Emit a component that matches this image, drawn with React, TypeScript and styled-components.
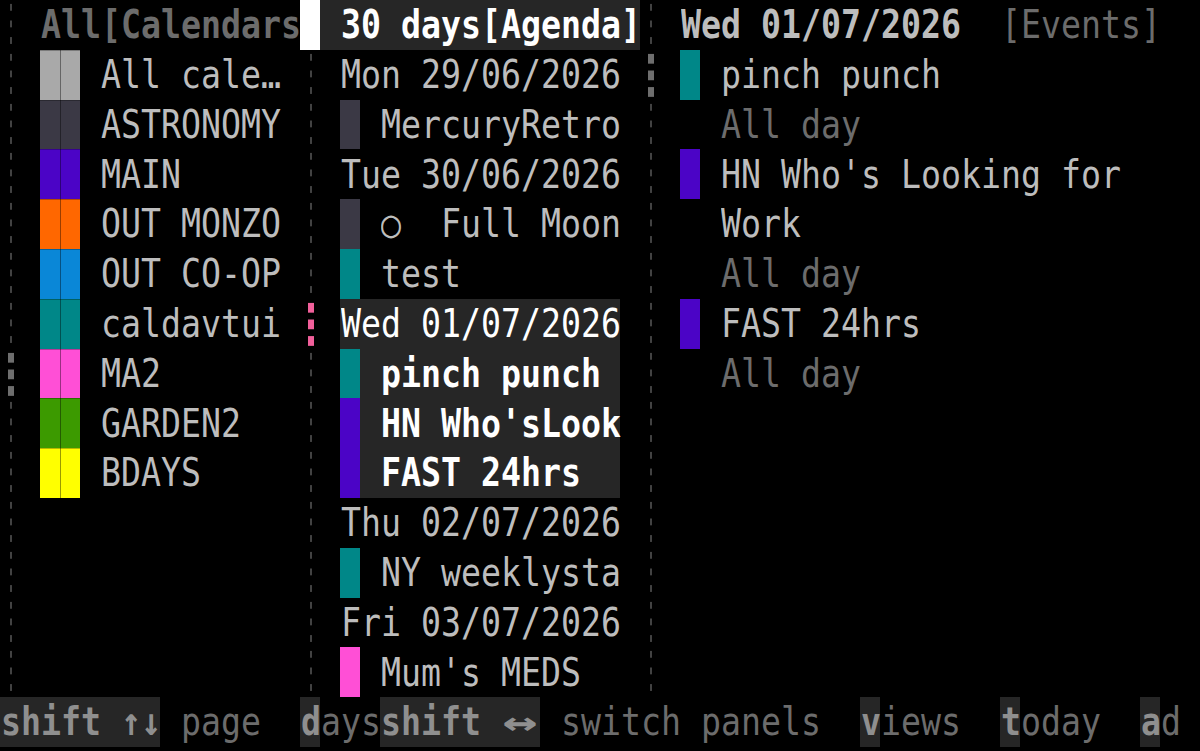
import styled, { createGlobalStyle } from "styled-components";

// terminal cell metrics
const ROW = 49.8;
const COL = 20;

const colors = {
  bg: "#000000",
  text: "#bdbdbd",
  dim: "#6c6c6c",
  white: "#ffffff",
  panel: "#262626",
  rule: "#424242",
  thumb: "#6e6e6e",
  pink: "#f2609b",
  key: "#8f8f8f",
};

type RuleKind = "thin" | "thick" | "pink" | "cursor";

type Calendar = { name: string; color: string };

const calendars: Calendar[] = [
  { name: "All cale…", color: "#a9a9a9" },
  { name: "ASTRONOMY", color: "#3b3945" },
  { name: "MAIN", color: "#4b04c6" },
  { name: "OUT MONZO", color: "#ff6700" },
  { name: "OUT CO-OP", color: "#0a87d7" },
  { name: "caldavtui", color: "#008788" },
  { name: "MA2", color: "#ff4fd6" },
  { name: "GARDEN2", color: "#3c9a00" },
  { name: "BDAYS", color: "#ffff00" },
];

type AgendaItem =
  | { kind: "day"; label: string; selected?: boolean }
  | { kind: "event"; title: string; color: string; selected?: boolean };

const agenda: AgendaItem[] = [
  { kind: "day", label: "Mon 29/06/2026" },
  { kind: "event", title: "MercuryRetro", color: "#3b3945" },
  { kind: "day", label: "Tue 30/06/2026" },
  { kind: "event", title: "○  Full Moon", color: "#3b3945" },
  { kind: "event", title: "test", color: "#008788" },
  { kind: "day", label: "Wed 01/07/2026", selected: true },
  { kind: "event", title: "pinch punch", color: "#008788", selected: true },
  { kind: "event", title: "HN Who'sLook", color: "#4b04c6", selected: true },
  { kind: "event", title: "FAST 24hrs", color: "#4b04c6", selected: true },
  { kind: "day", label: "Thu 02/07/2026" },
  { kind: "event", title: "NY weeklysta", color: "#008788" },
  { kind: "day", label: "Fri 03/07/2026" },
  { kind: "event", title: "Mum's MEDS", color: "#ff4fd6" },
];

type DayEvent = { lines: string[]; color: string };

const dayEvents: DayEvent[] = [
  { lines: ["pinch punch"], color: "#008788" },
  { lines: ["HN Who's Looking for", "Work"], color: "#4b04c6" },
  { lines: ["FAST 24hrs"], color: "#4b04c6" },
];

const dash = (color: string, left: number, width: number, from: number, to: number) =>
  `linear-gradient(to bottom, transparent ${from}px, ${color} ${from}px, ${color} ${to}px, transparent ${to}px) ${left}px 0 / ${width}px ${ROW / 3}px repeat-y`;

const ruleBackground: Record<RuleKind, string> = {
  thin: dash(colors.rule, 10, 2, 4, 11),
  thick: dash(colors.thumb, 8, 6, 3.5, 13.5),
  pink: dash(colors.pink, 8, 6, 3.5, 13.5),
  cursor: colors.white,
};

const GlobalStyle = createGlobalStyle`
  html, body {
    margin: 0;
    padding: 0;
    background: ${colors.bg};
  }
`;

const Screen = styled.div`
  width: 1200px;
  height: 751px;
  overflow: hidden;
  background: ${colors.bg};
  display: flex;
  flex-direction: column;
  font-family: "DejaVu Sans Mono", "Liberation Mono", monospace;
  font-size: 33.22px;
  line-height: 1;
  color: ${colors.text};
  white-space: pre;
`;

const Body = styled.div`
  display: flex;
  height: ${ROW * 14}px;
  flex: none;
`;

const Rule = styled.div`
  width: ${COL}px;
  flex: none;
  display: flex;
  flex-direction: column;
`;

const RuleCell = styled.div<{ $kind: RuleKind }>`
  height: ${ROW}px;
  flex: none;
  background: ${({ $kind }) => ruleBackground[$kind]};
`;

const Panel = styled.div<{ $cols: number }>`
  width: ${({ $cols }) => $cols * COL}px;
  flex: none;
  display: flex;
  flex-direction: column;
`;

const Line = styled.div<{ $indent?: number; $bg?: string }>`
  height: ${ROW}px;
  flex: none;
  display: flex;
  align-items: center;
  padding-left: ${({ $indent = 0 }) => $indent * COL}px;
  background: ${({ $bg }) => $bg ?? "transparent"};
`;

const Text = styled.span<{ $color?: string; $bold?: boolean }>`
  display: inline-block;
  padding-left: 1px;
  margin-right: -1px;
  transform: scaleY(1.16);
  color: ${({ $color }) => $color ?? "inherit"};
  font-weight: ${({ $bold }) => ($bold ? 700 : "inherit")};
`;

const Swatch = styled.div<{ $color: string }>`
  align-self: stretch;
  width: ${COL}px;
  flex: none;
  margin-right: ${COL}px;
  background: ${({ $color }) => $color};
`;

const CalSwatch = styled.div`
  align-self: stretch;
  display: flex;
  flex: none;
  margin-right: ${COL}px;
`;

const SwatchCell = styled.div<{ $color: string; $seam?: boolean }>`
  width: ${COL}px;
  background: ${({ $color }) => $color};
  box-shadow: inset 0 1px rgba(0, 0, 0, 0.28)
    ${({ $seam }) => ($seam ? ", inset 1px 0 rgba(0, 0, 0, 0.4)" : "")};
`;

const AgendaList = styled.div`
  display: flex;
  flex-direction: column;
  padding: 0 ${COL}px;
`;

const StatusBar = styled.div`
  height: ${ROW}px;
  flex: none;
  display: flex;
  align-items: stretch;
`;

const Key = styled.span`
  display: flex;
  align-items: center;
  background: ${colors.panel};
  color: ${colors.key};
  font-weight: 700;
`;

const Desc = styled.span`
  display: flex;
  align-items: center;
  color: ${colors.dim};
  font-weight: 400;
`;

// double-width arrow glyph, stretched across two cells
const WideArrow = styled.span`
  display: inline-block;
  width: ${COL}px;
  margin: 0 ${COL / 2}px;
  text-align: center;
  transform: scale(1.75, 1.16);
`;

const RuleColumn = ({ kinds }: { kinds: RuleKind[] }) => (
  <Rule>
    {kinds.map((k, i) => (
      <RuleCell key={i} $kind={k} />
    ))}
  </Rule>
);

const rule = (thumbRow: number, thumb: RuleKind, top: RuleKind = "thin") =>
  Array.from({ length: 14 }, (_, i): RuleKind =>
    i === 0 ? top : i === thumbRow ? thumb : "thin"
  );

const CalendarsPanel = () => (
  <Panel $cols={14}>
    <Line $indent={1}>
      <Text $color={colors.dim} $bold>
        All[Calendars
      </Text>
    </Line>
    {calendars.map((c) => (
      <Line key={c.name} $indent={1}>
        <CalSwatch>
          <SwatchCell $color={c.color} />
          <SwatchCell $color={c.color} $seam />
        </CalSwatch>
        <Text>{c.name}</Text>
      </Line>
    ))}
  </Panel>
);

const AgendaPanel = () => (
  <Panel $cols={16}>
    <Line $indent={1} $bg={colors.panel}>
      <Text $color={colors.white} $bold>
        30 days[Agenda]
      </Text>
    </Line>
    <AgendaList>
      {agenda.map((item, i) => {
        const bg = item.selected ? colors.panel : undefined;
        const color = item.selected ? colors.white : undefined;
        if (item.kind === "day") {
          return (
            <Line key={i} $bg={bg}>
              <Text $color={color}>{item.label}</Text>
            </Line>
          );
        }
        return (
          <Line key={i} $bg={bg}>
            <Swatch $color={item.color} />
            <Text $color={color} $bold={item.selected}>
              {item.title}
            </Text>
          </Line>
        );
      })}
    </AgendaList>
  </Panel>
);

const EventsPanel = () => (
  <Panel $cols={27}>
    <Line $indent={1}>
      <Text $bold>Wed 01/07/2026</Text>
      <Text $color={colors.dim}>{"  [Events]"}</Text>
    </Line>
    {dayEvents.map((ev) => (
      <div key={ev.lines[0]}>
        <Line $indent={1}>
          <Swatch $color={ev.color} />
          <Text>{ev.lines[0]}</Text>
        </Line>
        {ev.lines.slice(1).map((l) => (
          <Line key={l} $indent={3}>
            <Text>{l}</Text>
          </Line>
        ))}
        <Line $indent={3}>
          <Text $color={colors.dim}>All day</Text>
        </Line>
      </div>
    ))}
  </Panel>
);

const HelpBar = () => (
  <StatusBar>
    <Key>
      <Text>shift ↑↓</Text>
    </Key>
    <Desc>
      <Text>{" page  "}</Text>
    </Desc>
    <Key>
      <Text>d</Text>
    </Key>
    <Desc>
      <Text>ays</Text>
    </Desc>
    <Key>
      <Text>{"shift "}</Text>
      <WideArrow>↔</WideArrow>
    </Key>
    <Desc>
      <Text>{" switch panels  "}</Text>
    </Desc>
    <Key>
      <Text>v</Text>
    </Key>
    <Desc>
      <Text>{"iews  "}</Text>
    </Desc>
    <Key>
      <Text>t</Text>
    </Key>
    <Desc>
      <Text>{"oday  "}</Text>
    </Desc>
    <Key>
      <Text>a</Text>
    </Key>
    <Desc>
      <Text>d</Text>
    </Desc>
  </StatusBar>
);

export default function App() {
  return (
    <>
      <GlobalStyle />
      <Screen>
        <Body>
          <RuleColumn kinds={rule(7, "thick")} />
          <CalendarsPanel />
          <RuleColumn kinds={rule(6, "pink", "cursor")} />
          <AgendaPanel />
          <RuleColumn kinds={rule(1, "thick")} />
          <EventsPanel />
        </Body>
        <HelpBar />
      </Screen>
    </>
  );
}
